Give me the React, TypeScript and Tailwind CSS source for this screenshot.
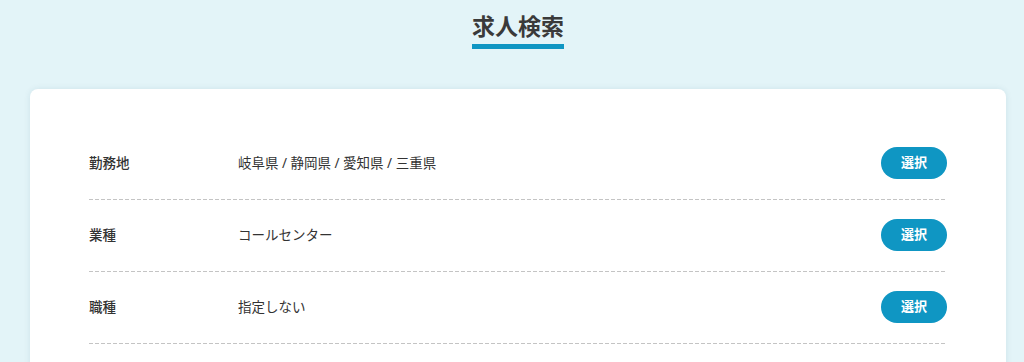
import React from 'react';

interface SearchRow {
  label: string;
  value: string;
}

const rows: SearchRow[] = [
  { label: '勤務地', value: '岐阜県 / 静岡県 / 愛知県 / 三重県' },
  { label: '業種', value: 'コールセンター' },
  { label: '職種', value: '指定しない' },
];

export default function App() {
  return (
    <div
      className="min-h-[362px] bg-[#e3f4f8] text-[#333] overflow-hidden"
      style={{ fontFamily: '"Noto Sans", "Noto Sans CJK JP", sans-serif' }}
    >
      <div className="ml-[30px] w-[976px] pt-[10px]">
        <div className="flex justify-center">
          <h1 className="text-[23px] leading-[30px] font-bold pb-[3px] border-b-[5px] border-[#0f96c3] text-[#3a3a3a] translate-y-[1px]">
            求人検索
          </h1>
        </div>

        <div className="mt-[41px] bg-white rounded-lg shadow-[0_0_6px_rgba(0,80,110,0.10)] px-[59px] pt-[39px] pb-[40px]">
          {rows.map((row) => (
            <div key={row.label}>
              <div className="flex items-center pt-[19px] pb-[20px]">
                <div className="w-[149px] text-[13.5px] font-medium text-[#333]">{row.label}</div>
                <div className="flex-1 text-[13.5px] text-[#333]">{row.value}</div>
                <button className="w-[66px] h-[32px] rounded-full bg-[#0f96c3] text-white text-[13px] font-bold">
                  選択
                </button>
              </div>
              <div className="h-px bg-[linear-gradient(to_right,#c4c4c4_4px,transparent_4px)] bg-[length:6px_1px] bg-repeat-x" />
            </div>
          ))}
        </div>
      </div>
    </div>
  );
}
